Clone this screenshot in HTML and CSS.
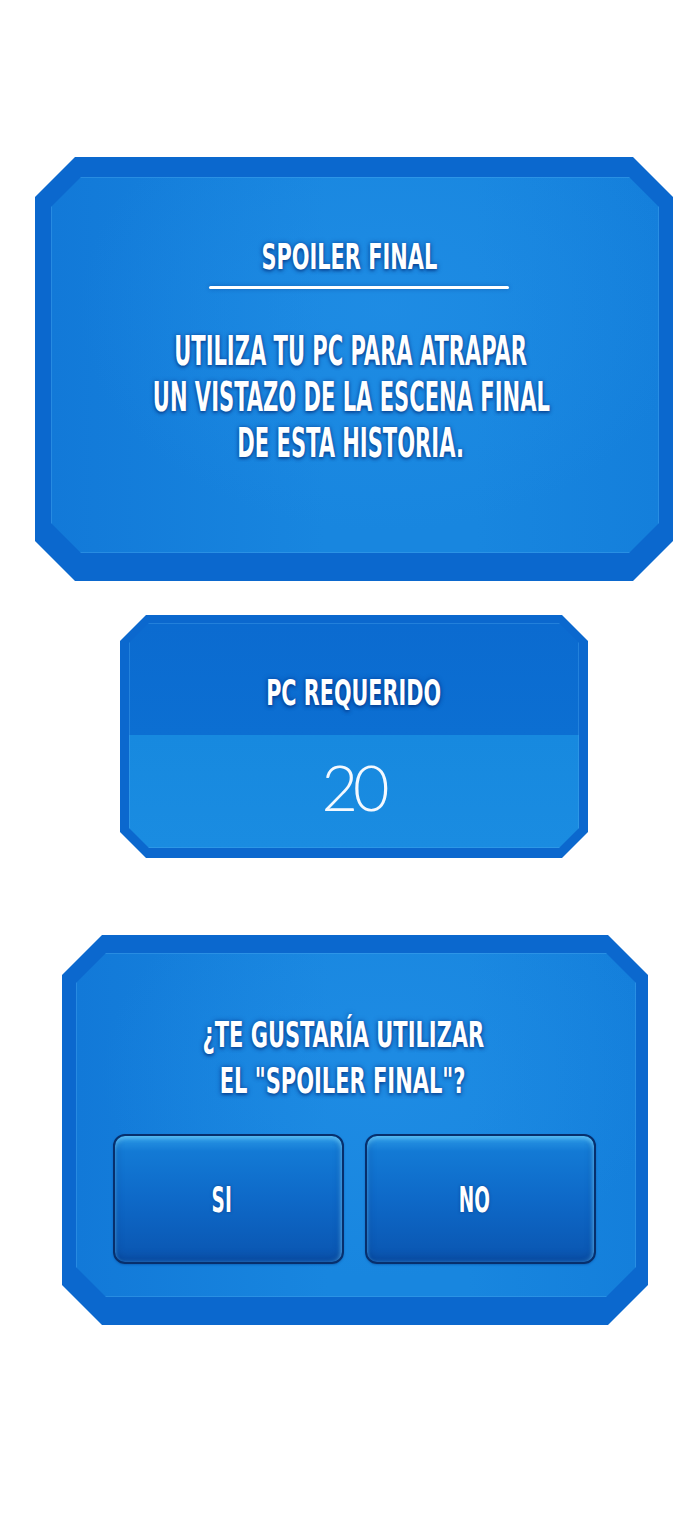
FILE: index.html
```html
<!DOCTYPE html>
<html lang="es">
<head>
  <meta charset="UTF-8">
  <meta name="viewport" content="width=device-width, initial-scale=1.0">
  <title>Spoiler Final</title>
  <link rel="stylesheet" href="styles.css">
</head>
<body>
  <main class="page">

    <section class="panel panel-story">
      <div class="panel-face">
        <h2 class="title"><span class="squeeze">SPOILER FINAL</span></h2>
        <div class="rule"></div>
        <p class="story">
          <span class="squeeze">UTILIZA TU PC PARA ATRAPAR</span>
          <span class="squeeze">UN VISTAZO DE LA ESCENA FINAL</span>
          <span class="squeeze">DE ESTA HISTORIA.</span>
        </p>
      </div>
    </section>

    <section class="panel panel-cost">
      <div class="panel-face">
        <div class="cost-label"><span class="squeeze">PC REQUERIDO</span></div>
        <div class="cost-value">20</div>
      </div>
    </section>

    <section class="panel panel-ask">
      <div class="panel-face">
        <p class="question">
          <span class="squeeze">¿TE GUSTARÍA UTILIZAR</span>
          <span class="squeeze">EL "SPOILER FINAL"?</span>
        </p>
        <div class="choices">
          <button class="choice"><span class="squeeze">SI</span></button>
          <button class="choice"><span class="squeeze">NO</span></button>
        </div>
      </div>
    </section>

  </main>
</body>
</html>
```

FILE: styles.css
```css
:root {
  --frame: #0b68ce;
  --face-dark: #1279d8;
  --face-light: #1886df;
  --text-glow: 0 0 6px rgba(0, 45, 130, 0.65), 0 2px 4px rgba(0, 40, 110, 0.5);
}

body {
  margin: 0;
  background: #ffffff;
  font-family: "Liberation Sans Narrow", "DejaVu Sans Condensed", "Liberation Sans", sans-serif;
  color: #ffffff;
}

.page {
  width: 690px;
  height: 1516px;
  display: flex;
  flex-direction: column;
  align-items: flex-start;
  overflow: hidden;
}

/* chamfered frame */
.panel {
  --cut: 40px;
  background: var(--frame);
  clip-path: polygon(var(--cut) 0, calc(100% - var(--cut)) 0, 100% var(--cut), 100% calc(100% - var(--cut)),
    calc(100% - var(--cut)) 100%, var(--cut) 100%, 0 calc(100% - var(--cut)), 0 var(--cut));
  display: flex;
  box-sizing: border-box;
  flex-shrink: 0;
}

.panel-face {
  --cut: 30px;
  flex: 1;
  min-width: 0;
  clip-path: polygon(var(--cut) 0, calc(100% - var(--cut)) 0, 100% var(--cut), 100% calc(100% - var(--cut)),
    calc(100% - var(--cut)) 100%, var(--cut) 100%, 0 calc(100% - var(--cut)), 0 var(--cut));
  background:
    radial-gradient(ellipse at 55% 35%, rgba(36, 145, 232, 0.5), rgba(36, 145, 232, 0) 65%),
    linear-gradient(90deg, var(--face-dark), var(--face-light) 45%, var(--face-light) 70%, #147fdb);
  display: flex;
  flex-direction: column;
  align-items: center;
  box-shadow: inset 0 0 0 1px rgba(90, 180, 245, 0.3);
}

.squeeze {
  display: inline-block;
  white-space: nowrap;
  transform: scaleX(0.64);
}

.panel-story {
  margin: 157px 0 0 35px;
  width: 638px;
  height: 424px;
  padding: 20px 14px 28px 16px;
}

.title {
  margin: 62px 11px 0 0;
  font-size: 36px;
  line-height: 36px;
  font-weight: bold;
  text-shadow: var(--text-glow);
}

.title .squeeze {
  transform: scaleX(0.645);
}

.rule {
  width: 300px;
  height: 3px;
  margin: 11px 0 0 8px;
  background: #ffffff;
  border-radius: 2px;
  box-shadow: 0 0 4px rgba(0, 45, 130, 0.4);
}

.story {
  margin: 39px 8px 0 0;
  font-size: 40px;
  line-height: 46px;
  font-weight: bold;
  text-align: center;
  text-shadow: var(--text-glow);
  display: flex;
  flex-direction: column;
  align-items: center;
}

.story .squeeze {
  transform: scaleX(0.585);
}

.panel-cost {
  --cut: 26px;
  margin: 34px 0 0 120px;
  width: 468px;
  height: 243px;
  padding: 8px 9px 10px 9px;
}

.panel-cost .panel-face {
  --cut: 20px;
  background: linear-gradient(180deg, #0b6bd0 0, #0c6fd2 50%, #1789df 50%, #1a8ce1 100%);
}

.cost-label,
.cost-value {
  flex: 1;
  display: flex;
  align-items: center;
  justify-content: center;
}

.cost-label {
  padding-top: 22px;
  font-size: 36px;
  font-weight: bold;
  text-shadow: var(--text-glow);
}

.cost-value {
  padding: 0 2px 14px 0;
  font-family: "Lato", "Open Sans", sans-serif;
  font-weight: 300;
  font-size: 63px;
  letter-spacing: -5px;
  color: #f4f9ff;
}

.panel-ask {
  margin: 77px 0 0 62px;
  width: 586px;
  height: 390px;
  padding: 18px 12px 28px 14px;
}

.question {
  margin: 59px 26px 0 0;
  font-size: 36px;
  line-height: 46px;
  font-weight: bold;
  text-shadow: var(--text-glow);
  display: flex;
  flex-direction: column;
  align-items: center;
}

.question .squeeze {
  transform: scaleX(0.648);
}

.choices {
  margin: 30px 4px 0 0;
  display: flex;
  gap: 21px;
}

.choice {
  width: 231px;
  height: 130px;
  border: 2px solid #072f6c;
  border-radius: 12px;
  background: linear-gradient(180deg, #2b98e6 0, #137ad5 12%, #0e69c8 50%, #0a55b0 100%);
  box-shadow: inset 0 3px 4px rgba(120, 215, 255, 0.55), inset -2px 0 4px rgba(110, 200, 250, 0.35), inset 0 -4px 8px rgba(0, 40, 110, 0.35), 0 1px 2px rgba(0, 60, 140, 0.4);
  color: #ffffff;
  font-family: inherit;
  font-size: 36px;
  font-weight: bold;
  text-shadow: 0 0 4px rgba(0, 30, 90, 0.5);
  padding: 0 12px 0 0;
  cursor: pointer;
}

.choice .squeeze {
  transform: scaleX(0.57);
}
```
